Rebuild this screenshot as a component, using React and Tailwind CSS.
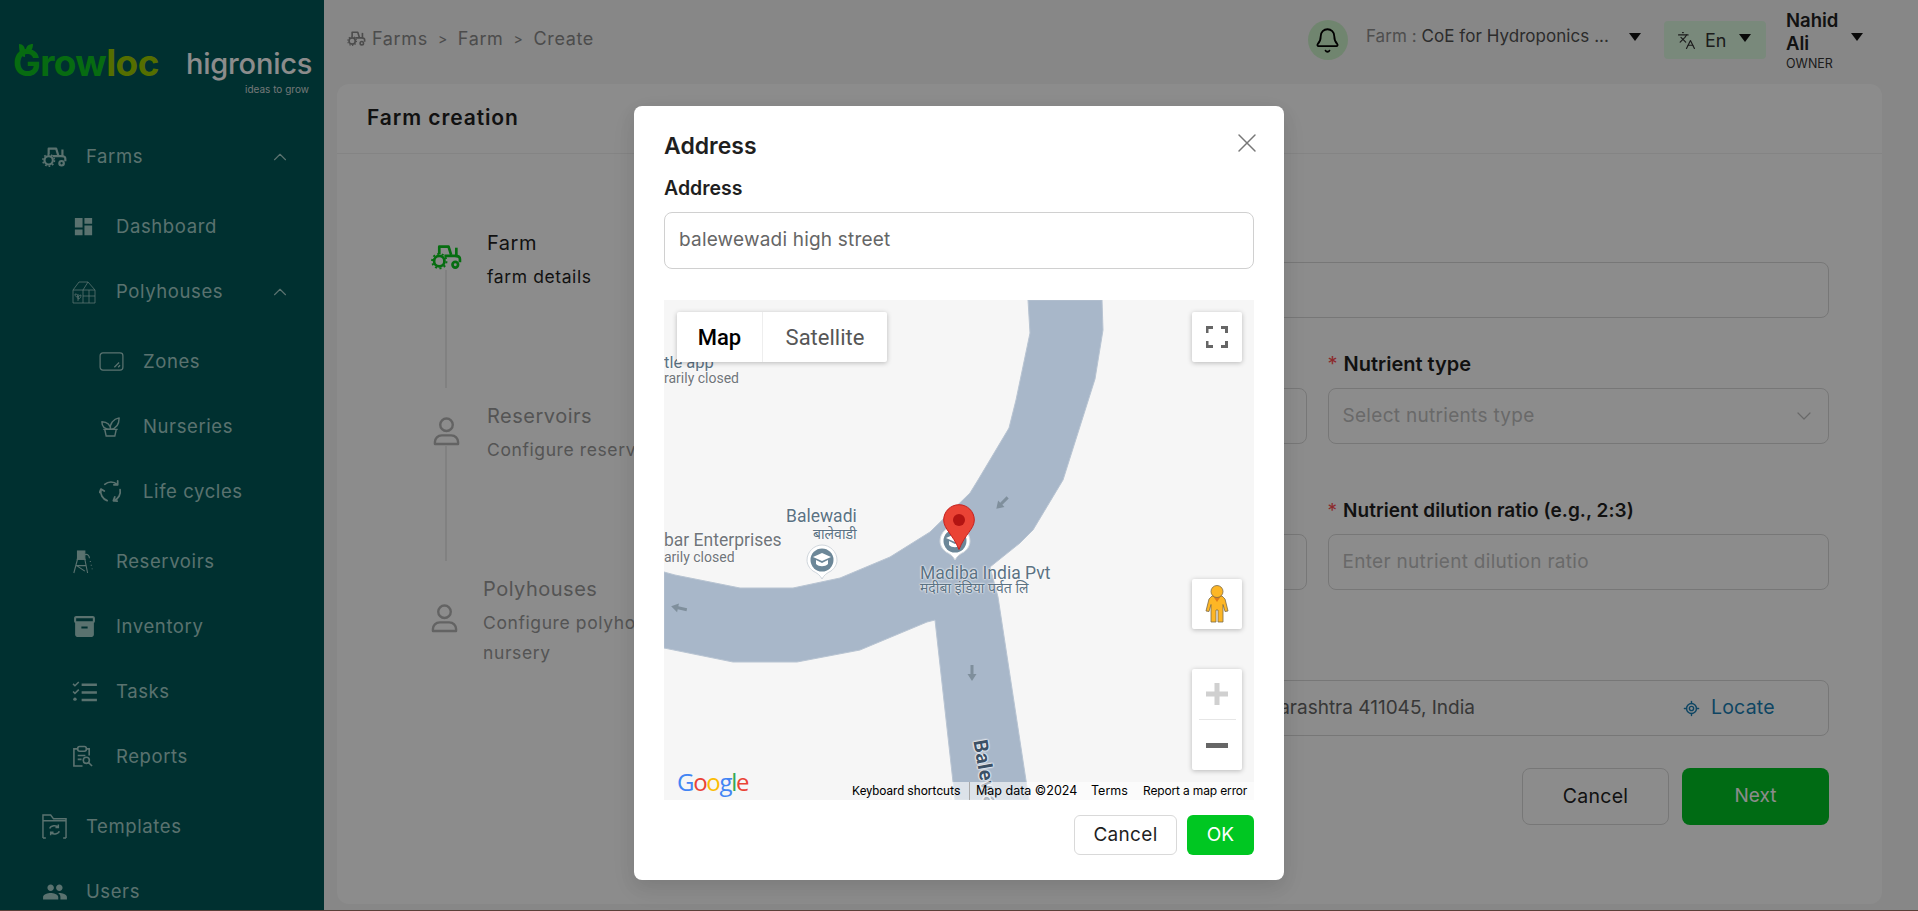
import React from "react";
import { Bell, ChevronUp, ChevronDown, X, Languages, LocateFixed } from "lucide-react";
import { MdInventory2, MdPeople, MdDashboard } from "react-icons/md";

const Tractor = ({ className }) => (
  <svg viewBox="0 0 30 24" className={className} fill="none" stroke="currentColor" strokeWidth="2.6">
    <path d="M8 9V2h9l2.500 8" strokeLinejoin="round" />
    <path d="M13 11h10c3 0 5 1 5 3v3" strokeLinejoin="round" />
    <path d="M24.500 3v8" />
    <circle cx="8" cy="16" r="5" />
    <circle cx="8" cy="16" r="7" strokeWidth="1.800" strokeDasharray="2 2.400" />
    <circle cx="23.500" cy="19.500" r="2.700" />
  </svg>
);
const Person = ({ className }) => (
  <svg viewBox="0 0 28 30" className={className} fill="none" stroke="currentColor" strokeWidth="2.500">
    <circle cx="14" cy="8" r="6.500" />
    <path d="M2 28v-2c0-4 3-7 7-7h10c4 0 7 3 7 7v2z" strokeLinejoin="round" />
  </svg>
);
const Caret = ({ className }) => (
  <svg viewBox="0 0 12 8" className={className} fill="currentColor"><path d="M0 0h12L6 8z" /></svg>
);
const Greenhouse = ({ className }) => (
  <svg viewBox="0 0 24 24" className={className} fill="none" stroke="currentColor" strokeWidth="0.8">
    <path d="M1 23V10l6-8h9l7 8v13z" /><path d="M16 2l-5 8H1M11 10h12M11 10v13M17 10v13M11 16h12" />
    <path d="M6 21v-7M6 17c-3 0-3-2-3-3 2 0 3 1 3 3zM6 19c2 0 3-2 3-4-2 0-3 2-3 4z" />
  </svg>
);
const ZoneIcon = ({ className }) => (
  <svg viewBox="0 0 26 20" className={className} fill="none" stroke="currentColor" strokeWidth="1.300">
    <rect x="1" y="1" width="24" height="18" rx="3" /><path d="M16 16l5-5M20 16l2-2" />
  </svg>
);
const Pot = ({ className }) => (
  <svg viewBox="0 0 24 24" className={className} fill="none" stroke="currentColor" strokeWidth="1.500">
    <path d="M6 15h12l-1.500 7h-9zM4.500 15h15" /><path d="M12 15c0-4-3-8-9-8 0 5 3 8 9 8zM12 15c-1-6 3-11 9-12 0 7-3 11-9 12z" strokeLinejoin="round" />
  </svg>
);
const CycleIcon = ({ className }) => (
  <svg viewBox="0 0 24 24" className={className} fill="none" stroke="currentColor" strokeWidth="1.800" strokeLinecap="round" strokeLinejoin="round">
    <path d="M6 4.500A10 10 0 0 1 19 4.500" /><path d="M19.500 1v4h-4" />
    <path d="M22 10a10 10 0 0 1-6.500 11.500" /><path d="M19 22l-4-.5 1.500-4" />
    <path d="M8.500 21.500A10 10 0 0 1 2 10" /><path d="M0.500 13L2 9.500 5.500 11.500" />
  </svg>
);
const Tank = ({ className }) => (
  <svg viewBox="0 0 24 26" className={className} fill="none" stroke="currentColor" strokeWidth="1.200">
    <rect x="6" y="1" width="8" height="9" fill="currentColor" /><path d="M5 10h10M6 10L2 25M14 10l3 15M4 17h11M5 17l9 6M14 5c3-1 5 1 5 4" />
    <path d="M20 12v1M21 16v1M22 20v1" />
  </svg>
);
const TaskIcon = ({ className }) => (
  <svg viewBox="0 0 26 22" className={className} fill="none" stroke="currentColor">
    <path d="M1 3l2 2 4-4M1 11l2 2 4-4" strokeWidth="1.600" /><circle cx="3" cy="19" r="1.800" fill="currentColor" stroke="none" />
    <path d="M10 4h16M10 12h16M10 20h16" strokeWidth="2.600" />
  </svg>
);
const ReportIcon = ({ className }) => (
  <svg viewBox="0 0 22 24" className={className} fill="none" stroke="currentColor" strokeWidth="1.700">
    <path d="M6 4H2v18h9M15 4h3v7" /><rect x="6" y="1.500" width="9" height="5" rx="2" /><path d="M6 11h8M6 15h4" />
    <circle cx="15" cy="16" r="3.200" /><path d="M17.500 18.500l3.500 3.500" />
  </svg>
);
const TemplateIcon = ({ className }) => (
  <svg viewBox="0 0 26 26" className={className} fill="none" stroke="currentColor" strokeWidth="1.500">
    <path d="M1 25V1h8l3 4h13v20" /><path d="M1 7h24M1 25h3M22 25h3" />
    <path d="M8 15c1-3 7-4 9-1M18 18c-1 3-7 4-9 1M17 11v3h-3M9 22v-3h3" />
  </svg>
);

const Row = ({ level = 0, icon, label, chevron, gap }) => {
  const pads = ["pl-[42px]", "pl-[72px]", "pl-[99px]"];
  return (
    <div className={`h-[65px] flex items-center pr-[33px] ${gap ? "mt-[5px]" : ""} ${pads[level]}`}>
      <div className="w-[44px] shrink-0 flex items-center">{icon}</div>
      <span className="flex-1 text-[18.5px] tracking-[0.6px] text-[#a5d0cb]">{label}</span>
      {chevron && <ChevronUp className="w-[22px] h-[22px] text-[#a5d0cb]" strokeWidth={1.2} />}
    </div>
  );
};

const Sidebar = () => {
  const ic = "text-[#a5d0cb]";
  return (
    <aside className="w-[324px] shrink-0 h-full bg-[#005858] overflow-hidden">
      <div className="h-[124px] relative flex items-start">
        <svg viewBox="0 0 16 14" className="absolute left-[18px] top-[44px] w-[16px] h-[14px] text-[#10c820]" fill="currentColor">
          <path d="M1 0c4 0 6 3 6 7v6C3 13 1 9 1 0zM15 0c-4 0-7 2-7 6v3c4 0 7-3 7-9z" />
        </svg>
        <span className="absolute left-[13px] top-[41px] text-[37px] leading-[44px] font-bold tracking-[-0.6px] text-[#0ec41f]">
          Grow<span className="text-[#9cc800]">loc</span>
        </span>
        <span className="absolute left-[186px] top-[46px] text-[29px] leading-[36px] font-medium tracking-[-0.2px] text-[#ffffff]">higronics</span>
        <span className="absolute left-[245px] top-[82px] text-[10px] leading-[14px] text-[#d0d8d8]">ideas to grow</span>
      </div>
      <Row icon={<Tractor className={`w-[25px] h-[20px] ${ic}`} />} label="Farms" chevron />
      <Row level={1} gap icon={<MdDashboard className={`w-[23px] h-[23px] ${ic}`} />} label="Dashboard" />
      <Row level={1} icon={<Greenhouse className={`w-[24px] h-[24px] ${ic}`} />} label="Polyhouses" chevron />
      <Row level={2} gap icon={<ZoneIcon className={`w-[25px] h-[19px] ${ic}`} />} label="Zones" />
      <Row level={2} icon={<Pot className={`w-[23px] h-[23px] ${ic}`} />} label="Nurseries" />
      <Row level={2} icon={<CycleIcon className={`w-[23px] h-[23px] ${ic}`} />} label="Life cycles" />
      <Row level={1} gap icon={<Tank className={`w-[22px] h-[24px] ${ic}`} />} label="Reservoirs" />
      <Row level={1} icon={<MdInventory2 className={`w-[25px] h-[25px] ${ic}`} />} label="Inventory" />
      <Row level={1} icon={<TaskIcon className={`w-[25px] h-[21px] ${ic}`} />} label="Tasks" />
      <Row level={1} icon={<ReportIcon className={`w-[21px] h-[23px] ${ic}`} />} label="Reports" />
      <Row gap icon={<TemplateIcon className={`w-[25px] h-[25px] ${ic}`} />} label="Templates" />
      <Row icon={<MdPeople className={`w-[26px] h-[26px] ${ic}`} />} label="Users" />
    </aside>
  );
};

const TopBar = () => (
  <header className="h-[84px] flex items-start pl-[23px] pr-[55px] relative">
    <div className="flex items-center h-[76px] text-[18px] tracking-[0.65px] text-[#8a8a8a]">
      <Tractor className="w-[19px] h-[15px] mr-[6px]" />
      <span>Farms</span><span className="mx-[10px] text-[14px]">&gt;</span>
      <span>Farm</span><span className="mx-[10px] text-[14px]">&gt;</span>
      <span>Create</span>
    </div>
    <div className="ml-auto flex items-start">
      <div className="w-[40px] h-[40px] mt-[20px] rounded-full bg-[#cdf2ca] flex items-center justify-center">
        <Bell className="w-[27px] h-[27px] text-black" strokeWidth={1.6} />
      </div>
      <div className="mt-[25px] ml-[18px] text-[17px] leading-[22px] tracking-[0.05px] text-[#505050] whitespace-nowrap">
        <span className="text-[#8e8e8e]">Farm : </span>CoE for Hydroponics ...
      </div>
      <Caret className="w-[12px] h-[8px] mt-[33px] ml-[20px] text-[#111]" />
      <div className="w-[102px] h-[38px] mt-[21px] ml-[23px] rounded-[4px] bg-[#dcf9e0] flex items-center pl-[13px] text-[#333]">
        <Languages className="w-[19px] h-[19px]" strokeWidth={1.5} />
        <span className="ml-[9px] text-[18px]">En</span>
        <Caret className="w-[12px] h-[8px] ml-[13px] -mt-[5px] text-[#111]" />
      </div>
      <div className="ml-[20px] mt-[9px] w-[60px]">
        <div className="text-[18.5px] leading-[23px] font-semibold text-[#222]">Nahid<br />Ali</div>
        <div className="text-[12.5px] leading-[17px] text-[#333]">OWNER</div>
      </div>
      <Caret className="w-[12px] h-[8px] mt-[33px] ml-[5px] text-[#111]" />
    </div>
  </header>
);

const Step = ({ icon, title, desc, line, shift, textShift, iconTop = "mt-[14px]", lineH }) => (
  <div className={`flex ${shift ? "-ml-[2px]" : ""}`}>
    <div className="w-[30px] flex flex-col items-center shrink-0">
      <div className={iconTop}>{icon}</div>
      {line && <div className={`w-[2px] bg-[#ebebeb] ${lineH}`} />}
    </div>
    <div className={textShift ? "ml-[24px]" : "ml-[26px]"}>
      <div className={`text-[20px] leading-[26px] tracking-[0.5px] ${desc.active ? "text-[#1f1f1f]" : "text-[#9a9a9a]"}`}>{title}</div>
      <div className={`text-[17.5px] leading-[30px] tracking-[0.6px] mt-[6px] w-[280px] ${desc.active ? "text-[#1f1f1f]" : "text-[#9a9a9a]"}`}>{desc.text}</div>
    </div>
  </div>
);

const Field = ({ label, children, className = "", lab = "" }) => (
  <div className={className}>
    {label && (
      <div className={`h-[24px] leading-[24px] font-semibold text-[#1f1f1f] whitespace-nowrap ${lab}`}>
        <span className="text-[#ff4d4f] font-normal mr-[6px]">*</span>{label}
      </div>
    )}
    {children}
  </div>
);

const inputBox = "h-[56px] rounded-[8px] border border-[#d9d9d9] flex items-center px-[14px] text-[19px] tracking-[0.3px] text-[#bfbfbf] whitespace-nowrap";

const Card = () => (
  <section className="ml-[13px] mr-[36px] h-[820px] rounded-[12px] bg-white">
    <div className="h-[70px] border-b border-[#f0f0f0] flex items-center pl-[30px] pb-[2px] text-[21px] font-semibold tracking-[0.9px] text-[#1f1f1f]">Farm creation</div>
    <div className="flex">
      <div className="w-[468px] pl-[94px] pt-[76px] shrink-0">
        <Step icon={<Tractor className="w-[31px] h-[26px] text-[#0bc71e]" />} title="Farm" desc={{ text: "farm details", active: true }} line lineH="h-[118px]" />
        <div className="mt-[15px]">
          <Step icon={<Person className="w-[27px] h-[29px] text-[#b5b5b5]" />} title="Reservoirs" desc={{ text: "Configure reservoirs" }} line lineH="h-[115px]" />
        </div>
        <div className="mt-[15px]">
          <Step shift textShift iconTop="mt-[28px]" icon={<Person className="w-[27px] h-[29px] text-[#b5b5b5]" />} title="Polyhouses" desc={{ text: "Configure polyhouses and nursery" }} />
        </div>
      </div>
      <div className="w-[1024px] pt-[108px]">
        <div className={inputBox} />
        <div className="grid grid-cols-2 gap-x-[21px] mt-[34px]">
          <Field><div className="h-[24px]" /><div className={`${inputBox} mt-[12px]`} /></Field>
          <Field label="Nutrient type" lab="text-[20px]">
            <div className={`${inputBox} mt-[12px] justify-between`}>
              <span>Select nutrients type</span>
              <ChevronDown className="w-[24px] h-[24px] -mr-[2px] text-[#bfbfbf]" strokeWidth={1.2} />
            </div>
          </Field>
          <Field className="mt-[55px]"><div className="h-[24px]" /><div className={`${inputBox} mt-[11px]`} /></Field>
          <Field className="mt-[55px]" label="Nutrient dilution ratio (e.g., 2:3)" lab="text-[19px] tracking-[0.05px]">
            <div className={`${inputBox} mt-[11px]`}>Enter nutrient dilution ratio</div>
          </Field>
        </div>
        <div className="mt-[90px] h-[56px] rounded-[8px] border border-[#d9d9d9] flex items-center">
          <span className="w-[669px] text-right text-[19px] text-[#666] whitespace-nowrap overflow-hidden">Balewadi High Street, Pune, Maharashtra 411045, India</span>
          <LocateFixed className="w-[17px] h-[17px] ml-[208px] text-[#1a7fb5]" strokeWidth={2} />
          <span className="ml-[11px] text-[19.5px] tracking-[0.2px] text-[#1a7fb5]">Locate</span>
        </div>
        <div className="flex justify-end gap-[13px] mt-[32px]">
          <div className="w-[147px] h-[57px] rounded-[8px] border border-[#d9d9d9] flex items-center justify-center text-[19.5px] tracking-[0.3px] text-[#222]">Cancel</div>
          <div className="w-[147px] h-[57px] rounded-[8px] bg-[#00c325] flex items-center justify-center text-[19px] text-white">Next</div>
        </div>
      </div>
    </div>
  </section>
);

const Road = () => (
  <svg viewBox="0 0 590 500" className="absolute inset-0 w-[590px] h-[500px]">
    <path
      d="M364 0L366 33L352 100L345 128L314 180L306 193L266 232L226 257L176 278L129 288L76 288L11 275L0 272V348L69 362H133L196 350L263 322L271 320L291 500H365L334 297L326 267L356 243L369 230L399 180L431 79L439 30L438 0Z"
      fill="#a8b7c9" stroke="#b8c4d2" strokeWidth="1"
    />
    <g fill="#7f8f9c">
      <path d="M-8 0l7-4.500v3h9v3h-9v3z" transform="translate(15 308) rotate(12)" />
      <path d="M-8 0l7-4.500v3h9v3h-9v3z" transform="translate(338 203) rotate(-45)" />
      <path d="M-8 0l7-4.500v3h9v3h-9v3z" transform="translate(308 373) rotate(-90)" />
    </g>
  </svg>
);

const Marker = ({ className }) => (
  <svg viewBox="0 0 32 36" className={className}>
    <path d="M16 35c-2-4-5-6-9-8C3 24 1 20 1 16 1 8 8 1 16 1s15 7 15 15c0 4-2 8-6 11-4 2-7 4-9 8z" fill="#fff" stroke="#d0d6dc" />
    <circle cx="16" cy="16" r="11.500" fill="#6c8798" />
    <path d="M16 9l9 4-9 4-9-4zM10 16v4c3 3 9 3 12 0v-4l-6 3z" fill="#fff" />
  </svg>
);

const GMap = () => {
  const ctl = "absolute bg-white rounded-[2px] shadow-[0_1px_5px_rgba(0,0,0,0.25)]";
  const pl = "absolute whitespace-nowrap leading-none [text-shadow:0_0_2px_#fff,0_0_2px_#fff]";
  return (
    <div className="relative mt-[31px] w-[590px] h-[500px] bg-[#f6f6f6] overflow-hidden font-['Roboto',sans-serif]">
      <Road />
      <span className={`${pl} left-0 top-[55px] text-[16.5px] text-[#5b7283]`}>tle app</span>
      <span className={`${pl} left-0 top-[71px] text-[14px] text-[#70757a]`}>rarily closed</span>
      <span className={`${pl} left-[122px] top-[208px] text-[17.5px] text-[#5b7283]`}>Balewadi</span>
      <span className={`${pl} left-[149px] top-[227px] text-[14px] text-[#5b7283] font-['Noto_Sans',sans-serif]`}>बालेवाडी</span>
      <span className={`${pl} left-0 top-[232px] text-[17.5px] text-[#70757a]`}>bar Enterprises</span>
      <span className={`${pl} left-0 top-[250px] text-[14px] text-[#70757a]`}>arily closed</span>
      <span className={`${pl} left-[256px] top-[265px] text-[17.5px] text-[#5b7283]`}>Madiba India Pvt</span>
      <span className={`${pl} left-[256px] top-[281px] text-[14px] text-[#5b7283] font-['Noto_Sans',sans-serif]`}>मदीबा इंडिया पर्वत लि</span>
      <span className="absolute left-[326px] top-[438px] text-[20px] leading-none font-bold tracking-[0.5px] text-[#3c5166] rotate-[80deg] origin-top-left whitespace-nowrap [text-shadow:0_0_2px_#fff,0_0_2px_#fff,0_0_2px_#fff]">Balewadi</span>
      <Marker className="absolute left-[142px] top-[244px] w-[32px] h-[36px]" />
      <Marker className="absolute left-[275px] top-[225px] w-[32px] h-[36px]" />
      <svg viewBox="0 0 32 46" className="absolute left-[279px] top-[204px] w-[32px] h-[46px]">
        <path d="M16 .7C7.500.7.7 7.500.7 16c0 9 9 14 15.300 29.500C22 30 31.300 25 31.300 16 31.300 7.500 24.500.7 16 .7z" fill="#ea4335" stroke="#c5221f" />
        <circle cx="16" cy="16" r="6" fill="#b31412" />
      </svg>

      <div className={`${ctl} left-[13px] top-[12px] w-[210px] h-[50px] flex text-[22px]`}>
        <div className="w-[86px] flex items-center justify-center font-medium text-black border-r border-[#eee]">Map</div>
        <div className="flex-1 flex items-center justify-center text-[#565656]">Satellite</div>
      </div>
      <div className={`${ctl} left-[528px] top-[12px] w-[50px] h-[50px] flex items-center justify-center`}>
        <svg viewBox="0 0 22 22" className="w-[22px] h-[22px]" fill="none" stroke="#666" strokeWidth="3">
          <path d="M1 7V1.500h6M15 1.500h5.500V7M1 15v5.500h6M15 20.500h5.500V15" />
        </svg>
      </div>
      <div className={`${ctl} left-[528px] top-[279px] w-[50px] h-[50px] flex items-center justify-center`}>
        <svg viewBox="0 0 24 38" className="w-[24px] h-[38px]" stroke="#7a6a4a" strokeWidth="0.800">
          <path d="M7 11h10l3 3 3 12-3 .5-2-7V37h-5V25h-2v12H6V19.500l-2 7-3-.5 3-12z" fill="#fdb625" />
          <path d="M8 11h8l-4 6z" fill="#e07b1a" stroke="none" />
          <circle cx="12" cy="6.500" r="6" fill="#fdb625" />
        </svg>
      </div>
      <div className={`${ctl} left-[528px] top-[369px] w-[50px] h-[101px] flex flex-col items-center`}>
        <svg viewBox="0 0 22 22" className="w-[22px] h-[22px] mt-[14px]" fill="#d0d0d0"><path d="M8.500 0h5v8.500H22v5h-8.500V22h-5v-8.500H0v-5h8.500z" /></svg>
        <div className="w-[37px] h-px bg-[#e6e6e6] mt-[14px]" />
        <div className="w-[22px] h-[5px] bg-[#666] mt-[23px]" />
      </div>

      <div className="absolute left-[13px] top-[469px] flex text-[24px] leading-[26px] font-['Open_Sans',sans-serif] font-medium tracking-[-1.300px]">
        <span className="text-[#4285f4]">G</span><span className="text-[#ea4335]">o</span><span className="text-[#fbbc05]">o</span><span className="text-[#4285f4]">g</span><span className="text-[#34a853]">l</span><span className="text-[#ea4335]">e</span>
      </div>
      <div className="absolute right-0 bottom-0 w-[302px] h-[18px] bg-white/60" />
      <div className="absolute left-[188px] bottom-0 h-[18px] w-[112px] text-[12.5px] leading-[18px] text-black whitespace-nowrap">Keyboard shortcuts</div>
      <div className="absolute left-[305px] bottom-0 h-[18px] w-px bg-[#aaa]" />
      <div className="absolute left-[312px] bottom-0 text-[12.5px] leading-[18px] text-black whitespace-nowrap font-['Inter',sans-serif]">Map data ©2024</div>
      <div className="absolute left-[427px] bottom-0 text-[12.5px] leading-[18px] text-black whitespace-nowrap font-['Inter',sans-serif]">Terms</div>
      <div className="absolute left-[479px] bottom-0 text-[12px] leading-[18px] tracking-[-0.150px] text-black whitespace-nowrap font-['Inter',sans-serif]">Report a map error</div>
    </div>
  );
};

const Modal = () => (
  <div className="absolute inset-0 bg-black/45 flex justify-center pt-[106px]">
    <div className="relative w-[650px] h-[774px] rounded-[8px] bg-white px-[30px] shadow-[0_6px_16px_rgba(0,0,0,0.08),0_9px_28px_rgba(0,0,0,0.05)]">
      <X className="absolute right-[21px] top-[21px] w-[32px] h-[32px] text-[#777]" strokeWidth={1.1} />
      <div className="pt-[25px] text-[23px] leading-[30px] font-semibold text-[#1f1f1f]">Address</div>
      <div className="mt-[14px] text-[19.5px] leading-[26px] font-semibold text-[#1f1f1f]">Address</div>
      <div className="mt-[11px] h-[57px] rounded-[8px] border border-[#d0d0d0] flex items-center px-[14px] text-[19px] tracking-[0.2px] text-[#666]">balewewadi high street</div>
      <GMap />
      <div className="flex justify-end gap-[10px] mt-[15px]">
        <div className="w-[103px] h-[40px] rounded-[6px] border border-[#d9d9d9] flex items-center justify-center text-[19px] tracking-[0.3px] text-[#1f1f1f]">Cancel</div>
        <div className="w-[67px] h-[40px] rounded-[6px] bg-[#00c722] flex items-center justify-center text-[19px] text-white">OK</div>
      </div>
    </div>
  </div>
);

export default function App() {
  return (
    <div className="relative w-[1918px] h-[911px] overflow-hidden flex bg-[#f6f6f6] font-['Inter',sans-serif] border-b border-[#5a4038]">
      <Sidebar />
      <main className="flex-1 min-w-0">
        <TopBar />
        <Card />
      </main>
      <Modal />
    </div>
  );
}
